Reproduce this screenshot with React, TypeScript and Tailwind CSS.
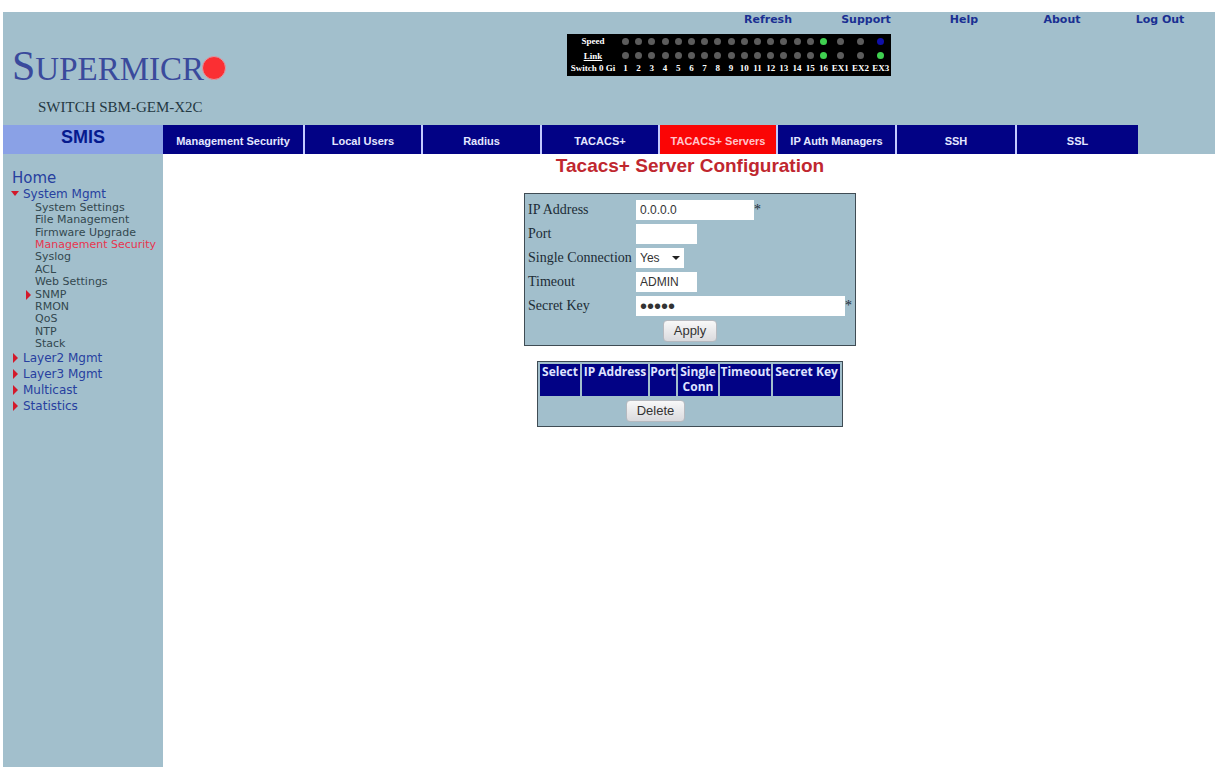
import { useState } from 'react';

interface Tab {
  label: string;
  active?: boolean;
}

interface Port {
  name: string;
  speed: string;
  link: string;
}

const TOP_LINKS = ['Refresh', 'Support', 'Help', 'About', 'Log Out'];

const TABS: Tab[] = [
  { label: 'Management Security' },
  { label: 'Local Users' },
  { label: 'Radius' },
  { label: 'TACACS+' },
  { label: 'TACACS+ Servers', active: true },
  { label: 'IP Auth Managers' },
  { label: 'SSH' },
  { label: 'SSL' },
];

const SYSTEM_ITEMS = [
  'System Settings',
  'File Management',
  'Firmware Upgrade',
  'Management Security',
  'Syslog',
  'ACL',
  'Web Settings',
  'SNMP',
  'RMON',
  'QoS',
  'NTP',
  'Stack',
];

const OTHER_SECTIONS = ['Layer2 Mgmt', 'Layer3 Mgmt', 'Multicast', 'Statistics'];

const COLUMNS = [
  { label: 'Select', width: 'w-10' },
  { label: 'IP Address', width: 'w-[66px]' },
  { label: 'Port', width: 'w-[26px]' },
  { label: 'Single Conn', width: 'w-10' },
  { label: 'Timeout', width: 'w-[51px]' },
  { label: 'Secret Key', width: 'w-[67px]' },
];

const OFF = 'bg-[#5c5c5c]';
const GREEN = 'bg-[#3fd050]';
const BLUE = 'bg-[#1010a8]';

const PORTS: Port[] = [
  ...Array.from({ length: 15 }, (_, i) => ({ name: String(i + 1), speed: OFF, link: OFF })),
  { name: '16', speed: GREEN, link: GREEN },
  { name: 'EX1', speed: OFF, link: OFF },
  { name: 'EX2', speed: OFF, link: OFF },
  { name: 'EX3', speed: BLUE, link: GREEN },
];

function Led({ color }: { color: string }) {
  return <span className={`mx-auto block h-[7px] w-[7px] rounded-full ${color}`} />;
}

function Arrow({ open }: { open?: boolean }) {
  return (
    <svg className="h-[10px] w-2 shrink-0" viewBox="0 0 8 10" fill="#d3192b">
      {open ? <path d="M0 2h8L4 7z" /> : <path d="M2 0l5 5-5 5z" />}
    </svg>
  );
}

function Logo() {
  return (
    <div className="flex items-center font-['Liberation_Serif',serif] text-[#3a4a9c]">
      <div className="leading-10">
        <span className="text-[42px]">S</span>
        <span className="text-[33px]">UPERMICR</span>
      </div>
      <svg className="mb-1 -ml-1 h-[26px] w-[26px]" viewBox="0 0 26 26">
        <circle cx="14" cy="12" r="11.5" fill="#fb2f33" stroke="#dd9aa5" strokeWidth="1" />
      </svg>
    </div>
  );
}

function PortPanel() {
  return (
    <table className="w-[324px] table-fixed border-collapse bg-black text-center font-['Liberation_Serif',serif] text-[9px] font-bold text-white">
      <colgroup>
        <col className="w-[51px]" />
        {PORTS.map((port) => (
          <col key={port.name} className={port.name.startsWith('EX') ? 'w-5' : 'w-[13px]'} />
        ))}
      </colgroup>
      <tbody>
        <tr className="h-[15px]">
          <th className="p-0">Speed</th>
          {PORTS.map((port) => (
            <td key={port.name} className="p-0"><Led color={port.speed} /></td>
          ))}
        </tr>
        <tr className="h-[13px]">
          <th className="p-0 leading-3 underline">Link</th>
          {PORTS.map((port) => (
            <td key={port.name} className="p-0"><Led color={port.link} /></td>
          ))}
        </tr>
        <tr className="h-[14px]">
          <th className="p-0 whitespace-nowrap">Switch 0 Gi</th>
          {PORTS.map((port) => (
            <td key={port.name} className="p-0">{port.name}</td>
          ))}
        </tr>
      </tbody>
    </table>
  );
}

function Sidebar() {
  return (
    <nav className="w-40 shrink-0 bg-[#a2bfcc] pt-4 font-['DejaVu_Sans',sans-serif] text-xs leading-4 text-[#27409f]">
      <a href="#home" className="ml-[9px] block text-[15px]">Home</a>
      <a href="#system" className="ml-2 flex items-center gap-1">
        <Arrow open />
        System Mgmt
      </a>
      <ul className="flex h-37 flex-col justify-between text-[11px] leading-3 text-[#33484f]">
        {SYSTEM_ITEMS.map((item) => (
          <li key={item}>
            <a
              href="#item"
              className={`flex items-center whitespace-nowrap ${item === 'SNMP' ? 'ml-[21px] gap-[3px]' : 'ml-8'} ${
                item === 'Management Security' ? 'text-[#e8354f]' : ''
              }`}
            >
              {item === 'SNMP' && <Arrow />}
              {item}
            </a>
          </li>
        ))}
      </ul>
      {OTHER_SECTIONS.map((section) => (
        <a key={section} href="#section" className="ml-2 flex items-center gap-1">
          <Arrow />
          {section}
        </a>
      ))}
    </nav>
  );
}

function ServerForm() {
  const [address, setAddress] = useState('0.0.0.0');
  const [port, setPort] = useState('');
  const [single, setSingle] = useState('Yes');
  const [timeout, setTimeoutValue] = useState('ADMIN');
  const [secret, setSecret] = useState('ADMIN');

  const field = "h-5 bg-white px-1 font-['Liberation_Sans',sans-serif] text-[#333] outline-none";

  return (
    <form
      onSubmit={(e) => e.preventDefault()}
      className="w-[332px] border border-[#3f4c54] bg-[#a2bfcc] px-[3px] pt-1 pb-[3px] font-['Liberation_Serif',serif] text-sm text-[#1c2c36]"
    >
      <div className="grid auto-rows-[24px] grid-cols-[108px_1fr] items-center">
        <label htmlFor="address">IP Address</label>
        <div className="flex">
          <input
            id="address"
            className={`${field} w-[118px] text-xs`}
            value={address}
            onChange={(e) => setAddress(e.target.value)}
          />
          <span>*</span>
        </div>

        <label htmlFor="port">Port</label>
        <input id="port" className={`${field} w-[61px] text-xs`} value={port} onChange={(e) => setPort(e.target.value)} />

        <label htmlFor="single" className="whitespace-nowrap">Single Connection</label>
        <div className="relative w-12">
          <select
            id="single"
            className={`${field} block w-full appearance-none text-xs`}
            value={single}
            onChange={(e) => setSingle(e.target.value)}
          >
            <option>Yes</option>
            <option>No</option>
          </select>
          <svg className="pointer-events-none absolute top-2 right-1 h-1 w-2" viewBox="0 0 8 4" fill="#222">
            <path d="M0 0h8L4 4z" />
          </svg>
        </div>

        <label htmlFor="timeout">Timeout</label>
        <input
          id="timeout"
          className={`${field} w-[61px] text-xs`}
          value={timeout}
          onChange={(e) => setTimeoutValue(e.target.value)}
        />

        <label htmlFor="secret">Secret Key</label>
        <div className="flex">
          <input
            id="secret"
            type="password"
            className={`${field} w-[209px] text-xl`}
            value={secret}
            onChange={(e) => setSecret(e.target.value)}
          />
          <span>*</span>
        </div>
      </div>
      <div className="flex justify-center pt-[2px]">
        <ActionButton label="Apply" />
      </div>
    </form>
  );
}

function ActionButton({ label }: { label: string }) {
  return (
    <button
      type="submit"
      className="h-[22px] rounded-sm border border-[#b5b9bf] bg-linear-to-b from-[#f8f8f8] to-[#dadade] px-[10px] font-['Liberation_Sans',sans-serif] text-[13px] leading-5 text-[#333]"
    >
      {label}
    </button>
  );
}

function ServerTable() {
  return (
    <table className="table-fixed border-separate border-spacing-[2px] border border-[#3f4c54] bg-[#a2bfcc]">
      <thead>
        <tr>
          {COLUMNS.map((column) => (
            <th
              key={column.label}
              className={`${column.width} bg-[#020285] p-0 pb-[2px] align-top font-['Open_Sans',sans-serif] text-xs leading-[15px] font-bold text-[#dfe3ff]`}
            >
              {column.label}
            </th>
          ))}
        </tr>
      </thead>
      <tbody>
        <tr>
          <td colSpan={5} className="px-0 py-[2px] text-center leading-none">
            <ActionButton label="Delete" />
          </td>
          <td />
        </tr>
      </tbody>
    </table>
  );
}

export default function App() {
  return (
    <div className="flex min-h-screen flex-col bg-white px-[3px] pt-3 pb-px">
      <header className="flex h-[113px] bg-[#a2bfcc]">
        <div className="w-60 shrink-0 pt-[34px] pl-[9px]">
          <Logo />
          <p className="mt-[2px] ml-[26px] font-['Liberation_Serif',serif] text-[15px] leading-5 text-[#243842]">
            SWITCH SBM-GEM-X2C
          </p>
        </div>
        <div className="flex flex-1 flex-col items-center">
          <div className="grid w-[496px] grid-cols-5 self-end pr-[6px] text-center font-['DejaVu_Sans',sans-serif] text-[11px] leading-4 font-bold text-[#1a2f92]">
            {TOP_LINKS.map((link) => (
              <a key={link} href="#top">{link}</a>
            ))}
          </div>
          <div className="mt-[6px]">
            <PortPanel />
          </div>
        </div>
      </header>

      <div className="flex h-[29px] bg-[#a2bfcc]">
        <div className="w-40 shrink-0 bg-[#8aa1e6] text-center font-['Liberation_Sans',sans-serif] text-lg leading-6 font-bold text-[#061a8e]">
          SMIS
        </div>
        <div className="grid flex-1 grid-cols-[142fr_118fr_119fr_118fr_118fr_119fr_120fr_121fr_77fr]">
          {TABS.map((tab) => (
            <a
              key={tab.label}
              href="#tab"
              className={`flex items-center justify-center border-r-2 border-[#c3caff] pt-[3px] font-['Liberation_Sans',sans-serif] text-[11px] font-bold whitespace-nowrap last:border-r-0 ${
                tab.active ? 'bg-[#fb0505] text-[#ffc4cc]' : 'bg-[#020285] text-[#e4e7ff]'
              }`}
            >
              {tab.label}
            </a>
          ))}
        </div>
      </div>

      <div className="flex flex-1">
        <Sidebar />
        <main className="flex flex-1 flex-col items-center pl-[2px]">
          <h1 className="font-['Liberation_Sans',sans-serif] text-[19px] leading-6 font-bold text-[#c0272f]">
            Tacacs+ Server Configuration
          </h1>
          <div className="mt-[15px]">
            <ServerForm />
          </div>
          <div className="mt-[15px]">
            <ServerTable />
          </div>
        </main>
      </div>
    </div>
  );
}
